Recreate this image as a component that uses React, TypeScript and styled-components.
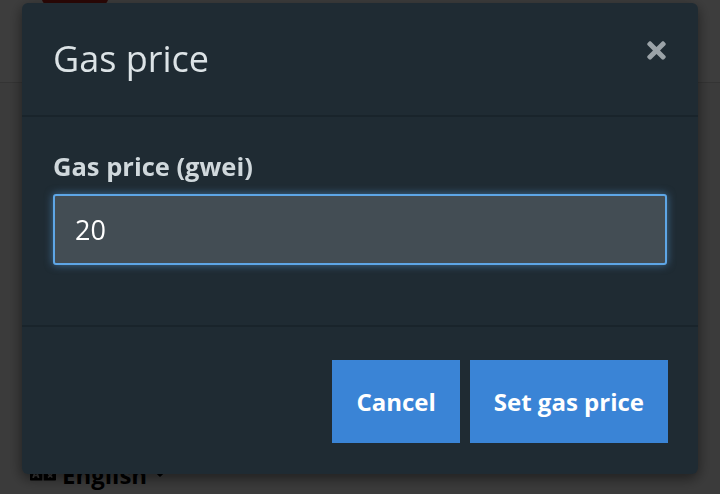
import styled, { createGlobalStyle } from "styled-components";
import { FaTimes, FaLanguage, FaCaretDown } from "react-icons/fa";

const GlobalStyle = createGlobalStyle`
  html, body {
    margin: 0;
    padding: 0;
    height: 100%;
    overflow: hidden;
  }
  body {
    font-family: "Open Sans", "Liberation Sans", sans-serif;
    background: #ffffff;
  }
`;

const Page = styled.div`
  height: 494px;
  display: flex;
  flex-direction: column;
  background: #f4f4f4;
`;

const TopBar = styled.div`
  height: 82px;
  background: #ffffff;
  border-bottom: 1px solid #d8d8d8;
  padding-left: 40px;
`;

const Logo = styled.div`
  width: 70px;
  height: 60px;
  border-radius: 50%;
  background: #b8231a;
  margin-top: -40px;
`;

const PageBody = styled.div`
  flex: 1;
`;

const PageFooter = styled.div`
  display: flex;
  align-items: center;
  gap: 6px;
  padding: 0 0 0 30px;
  height: 40px;
  font-size: 24px;
  font-weight: 700;
  color: #000;
`;

const Overlay = styled.div`
  position: fixed;
  inset: 0;
  background: rgba(0, 0, 0, 0.76);
  display: flex;
  justify-content: center;
  align-items: flex-start;
  padding-top: 3px;
`;

const Dialog = styled.div`
  width: 676px;
  background: #1f2b33;
  border-radius: 6px;
  box-shadow: 0 4px 14px rgba(0, 0, 0, 0.5);
  overflow: hidden;
`;

const Header = styled.div`
  display: flex;
  align-items: center;
  justify-content: space-between;
  padding: 30px 31px 30px 31px;
  border-bottom: 2px solid #19242b;
`;

const Title = styled.h4`
  margin: 0;
  font-size: 36px;
  line-height: 52px;
  font-weight: 400;
  color: #dce3e6;
`;

const CloseButton = styled.button`
  border: 0;
  background: none;
  padding: 0;
  margin-top: -17px;
  margin-right: -3px;
  color: #9ba3a8;
  display: flex;
  cursor: pointer;
`;

const Body = styled.div`
  padding: 32px 31px 60px 31px;
  border-bottom: 2px solid #19242b;
`;

const Label = styled.label`
  display: block;
  font-size: 25.5px;
  font-weight: 700;
  line-height: 34px;
  color: #d0d8dc;
  margin-bottom: 11px;
`;

const Input = styled.input`
  display: block;
  box-sizing: border-box;
  width: 100%;
  height: 71px;
  padding: 0 20px;
  font-family: "Open Sans", "Liberation Sans", sans-serif;
  font-size: 27px;
  color: #ffffff;
  background: #434d54;
  border: 2px solid #5ea6e6;
  border-radius: 3px;
  box-shadow: 0 0 8px rgba(94, 166, 230, 0.55);
  outline: none;
  caret-color: #ffffff;
`;

const Footer = styled.div`
  display: flex;
  justify-content: flex-end;
  gap: 10px;
  padding: 33px 30px 31px 31px;
`;

const Button = styled.button`
  height: 83px;
  padding: 0 24px;
  border: 0;
  border-radius: 0;
  background: #3a84d6;
  color: #ffffff;
  font-family: "Open Sans", "Liberation Sans", sans-serif;
  font-size: 24px;
  font-weight: 700;
  cursor: pointer;
`;

export default function App() {
  return (
    <>
      <GlobalStyle />
      <Page>
        <TopBar>
          <Logo />
        </TopBar>
        <PageBody />
        <PageFooter>
          <FaLanguage size={26} />
          English
          <FaCaretDown size={14} />
        </PageFooter>
      </Page>
      <Overlay>
        <Dialog>
          <Header>
            <Title>Gas price</Title>
            <CloseButton aria-label="Close">
              <FaTimes size={27} />
            </CloseButton>
          </Header>
          <Body>
            <Label htmlFor="gas">Gas price (gwei)</Label>
            <Input id="gas" defaultValue="20" autoFocus />
          </Body>
          <Footer>
            <Button>Cancel</Button>
            <Button>Set gas price</Button>
          </Footer>
        </Dialog>
      </Overlay>
    </>
  );
}
